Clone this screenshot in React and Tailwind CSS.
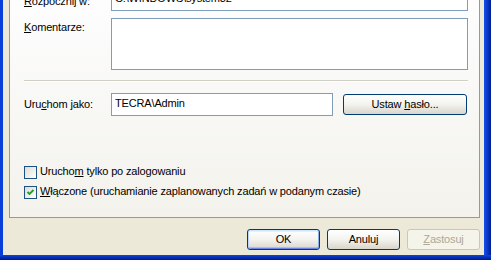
export default function App() {
  const btn =
    "h-[21px] rounded-[3px] border border-[#003c74] bg-gradient-to-b from-[#ffffff] via-[#f3f3ef] to-[#d9d5c9] flex items-center justify-center text-black";
  const input = "border border-[#7f9db9] bg-white";
  return (
    <div className="w-[491px] h-[260px] overflow-hidden flex flex-col bg-[#ece9d8] font-['Liberation_Sans',Arial,sans-serif] text-[11px] leading-[13px] tracking-[-0.16px] text-black">
      <div className="flex flex-1 min-h-0">
        <div className="w-[3px] bg-[#0a3ed8]" />
        <div className="flex-1 flex flex-col pl-[6px] pr-[4px]">
          <div className="h-[218px] shrink-0 border-x border-b border-[#919b9c] bg-gradient-to-b from-[#fdfdfe] to-[#f3f2ec] flex flex-col pl-[14px] pr-[11px]">
            {/* Rozpocznij w */}
            <div className="flex items-start mt-[-12px]">
              <div className="w-[87px] pt-[7px]">
                <u>R</u>ozpocznij w:
              </div>
              <div className={`${input} flex-1 h-[23px] pt-[3px] pl-[3px]`}>C:\WINDOWS\system32</div>
            </div>
            {/* Komentarze */}
            <div className="flex items-start mt-[7px]">
              <div className="w-[87px] pt-[3px]">
                <u>K</u>omentarze:
              </div>
              <div className={`${input} flex-1 h-[52px]`} />
            </div>
            {/* separator */}
            <div className="mt-[10px] h-[2px] border-t border-[#d0cfc4] border-b border-b-white" />
            {/* Uruchom jako */}
            <div className="flex items-start mt-[11px]">
              <div className="w-[87px] pt-[5px]">
                Uru<u>c</u>hom jako:
              </div>
              <div className={`${input} w-[222px] h-[23px] pt-[3px] pl-[3px]`}>TECRA\Admin</div>
              <div className={`${btn} ml-[10px] mt-[1px] w-[124px]`}>
                <span>
                  Ustaw <u>h</u>asło...
                </span>
              </div>
            </div>
            {/* checkboxes */}
            <div className="flex items-start mt-[50px]">
              <div className="w-[13px] h-[13px] border border-[#1c5180] bg-gradient-to-br from-[#dcdcd7] to-[#ffffff]" />
              <span className="ml-[3px] mt-[-1px]">
                Urucho<u>m</u> tylko po zalogowaniu
              </span>
            </div>
            <div className="flex items-start mt-[7px]">
              <div className="w-[13px] h-[13px] border border-[#1c5180] bg-gradient-to-br from-[#dcdcd7] to-[#ffffff] flex items-center justify-center">
                <svg width="11" height="11" viewBox="0 0 11 11">
                  <path d="M2.5 5 L4.5 7 L8.5 3" fill="none" stroke="#21a121" strokeWidth="1.8" />
                </svg>
              </div>
              <span className="ml-[3px] mt-[-1px]">
                <u>W</u>łączone (uruchamianie zaplanowanych zadań w podanym czasie)
              </span>
            </div>
          </div>
          {/* buttons */}
          <div className="flex justify-end gap-[7px] mt-[11px]">
            <div
              className={`${btn} w-[73px] shadow-[inset_0_1px_0_#cee7ff,inset_1px_0_0_#bcd4f6,inset_-1px_0_0_#89ade4,inset_0_-1px_0_#6982ee,inset_0_2px_0_#e5f0ff,inset_0_-2px_0_#a8c0f0]`}
            >
              OK
            </div>
            <div className={`${btn} w-[73px]`}>Anuluj</div>
            <div className="h-[21px] w-[73px] rounded-[3px] border border-[#c9c7ba] bg-[#f5f4ea] flex items-center justify-center text-[#aca899]">
              <span>
                <u>Z</u>astosuj
              </span>
            </div>
          </div>
        </div>
        <div className="w-[7px] bg-gradient-to-r from-[#1650e8] via-[#0a36c8] to-[#001b92]" />
      </div>
      <div className="h-[5px] bg-gradient-to-b from-[#0f44dc] to-[#00188f]" />
    </div>
  );
}
